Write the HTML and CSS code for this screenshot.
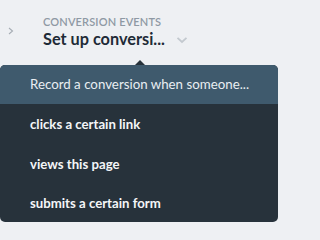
FILE: index.html
```html
<!DOCTYPE html>
<html>
<head>
<meta charset="utf-8">
<link rel="stylesheet" href="styles.css">
</head>
<body>
<div class="page">
  <div class="header">
    <svg class="chev-right" width="6" height="8" viewBox="0 0 6 8"><path d="M1 1 L4.5 4 L1 7" fill="none" stroke="#a6adb4" stroke-width="1.1"/></svg>
    <div class="titles">
      <div class="label">CONVERSION EVENTS</div>
      <div class="title-row">
        <span class="title">Set up conversi...</span>
        <svg class="chev-down" width="12" height="8" viewBox="0 0 12 8"><path d="M1.5 1.8 L6 6 L10.5 1.8" fill="none" stroke="#c3c9cf" stroke-width="1.8"/></svg>
      </div>
    </div>
  </div>
  <div class="menu">
    <div class="menu-head">Record a conversion when someone...</div>
    <div class="item">clicks a certain link</div>
    <div class="item">views this page</div>
    <div class="item">submits a certain form</div>
  </div>
</div>
</body>
</html>
```

FILE: styles.css
```css
html, body {
  margin: 0;
  padding: 0;
  background: #eef0f3;
}
body {
  width: 280px;
  height: 228px;
  overflow: hidden;
  font-family: Lato, "Open Sans", sans-serif;
}
.page {
  display: flex;
  flex-direction: column;
}
.header {
  display: flex;
  align-items: flex-start;
  padding: 15px 0 0 8px;
  height: 51px;
  box-sizing: border-box;
}
.chev-right {
  margin-top: 12px;
  margin-right: 29px;
}
.titles {
  display: flex;
  flex-direction: column;
}
.label {
  font-size: 11px;
  line-height: 13px;
  color: #8e99a4;
  font-weight: 600;
  letter-spacing: 0.15px;
}
.title-row {
  display: flex;
  align-items: center;
  margin-top: 1px;
}
.title {
  font-size: 16.3px;
  line-height: 20px;
  font-weight: 700;
  color: #1e2b37;
}
.chev-down {
  margin-left: 11px;
  margin-top: 2px;
}
.menu {
  position: relative;
  margin-top: 14px;
  width: 278px;
  background: #27323b;
  border-radius: 5px;
}
.menu::before {
  content: "";
  position: absolute;
  top: -5px;
  left: 135px;
  border-left: 5px solid transparent;
  border-right: 5px solid transparent;
  border-bottom: 5px solid #27323b;
}
.menu-head {
  background: #3f5a6d;
  color: #e9eef2;
  font-size: 13.3px;
  height: 39px;
  line-height: 39px;
  padding-left: 30px;
  border-radius: 5px 5px 0 0;
}
.item {
  color: #f4f6f8;
  font-size: 13.2px;
  font-weight: 700;
  height: 40px;
  line-height: 40px;
  padding-left: 30px;
}
.item:last-child {
  height: 38px;
  line-height: 38px;
}
```
